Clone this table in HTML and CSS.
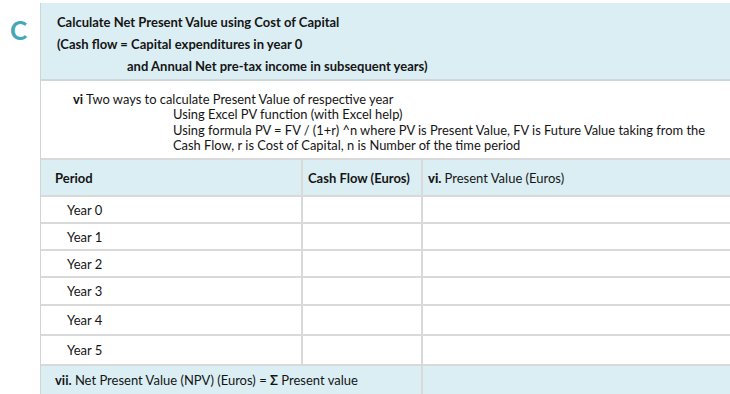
FILE: index.html
```html
<!DOCTYPE html>
<html>
<head>
<meta charset="utf-8">
<link rel="stylesheet" href="styles.css">
</head>
<body>
<div class="wrap">
  <div class="letter">C</div>
  <div class="panel">
    <div class="title">
      <div>Calculate Net Present Value using Cost of Capital</div>
      <div>(Cash flow = Capital expenditures in year 0</div>
      <div class="indent">and Annual Net pre-tax income in subsequent years)</div>
    </div>
    <div class="note">
      <div><b>vi</b> Two ways to calculate Present Value of respective year</div>
      <div class="sub">
        <div>Using Excel PV function (with Excel help)</div>
        <div>Using formula PV = FV / (1+r) ^n where PV is Present Value, FV is Future Value taking from the</div>
        <div>Cash Flow, r is Cost of Capital, n is Number of the time period</div>
      </div>
    </div>
    <table class="grid">
      <colgroup>
        <col class="c1"><col class="c2"><col class="c3">
      </colgroup>
      <tr class="head">
        <th class="period">Period</th>
        <th>Cash Flow (Euros)</th>
        <th><b>vi.</b> <span class="reg">Present Value (Euros)</span></th>
      </tr>
      <tr class="r27"><td class="yr">Year 0</td><td></td><td></td></tr>
      <tr class="r27"><td class="yr">Year 1</td><td></td><td></td></tr>
      <tr class="r27"><td class="yr">Year 2</td><td></td><td></td></tr>
      <tr class="r28"><td class="yr">Year 3</td><td></td><td></td></tr>
      <tr class="r30"><td class="yr">Year 4</td><td></td><td></td></tr>
      <tr class="r30"><td class="yr">Year 5</td><td></td><td></td></tr>
      <tr class="total">
        <td colspan="2" class="npv"><b>vii.</b> Net Present Value (NPV) (Euros) = <b>Σ</b> Present value</td>
        <td></td>
      </tr>
    </table>
  </div>
</div>
</body>
</html>
```
FILE: styles.css
```css
html, body {
  margin: 0;
  padding: 0;
  background: #ffffff;
}
body {
  width: 730px;
  height: 394px;
  overflow: hidden;
  font-family: Lato, "Open Sans", sans-serif;
  color: #151515;
}
.wrap {
  display: flex;
  padding-top: 3px;
}
.letter {
  width: 40px;
  flex: none;
  box-sizing: border-box;
  padding: 14px 0 0 10px;
  font-size: 26px;
  font-weight: 700;
  line-height: 26px;
  color: #45a8b6;
}
.panel {
  flex: 1;
  border-left: 1px solid #cfd4d6;
}
.title {
  background: #dbeef3;
  height: 78px;
  box-sizing: border-box;
  padding: 8px 0 0 16px;
  font-size: 13px;
  font-weight: 700;
  line-height: 22px;
  border-bottom: 2px solid #cdd6d9;
}
.title .indent {
  padding-left: 70px;
}
.note {
  height: 77px;
  box-sizing: border-box;
  padding: 11px 0 0 32px;
  font-size: 12.9px;
  line-height: 15.33px;
}
.note .sub {
  padding-left: 100px;
}
.grid {
  width: 100%;
  border-collapse: collapse;
  table-layout: fixed;
  font-size: 13px;
}
.c1 { width: 261px; }
.c2 { width: 120px; }
.grid th, .grid td {
  border-top: 2px solid #d9d9d9;
  border-left: 2px solid #d9d9d9;
  padding: 0 0 0 5px;
  text-align: left;
  vertical-align: middle;
  white-space: nowrap;
}
.grid th:first-child, .grid td:first-child {
  border-left: none;
}
.head th {
  height: 35px;
  background: #dbeef3;
  font-weight: 700;
}
.head th.period {
  padding-left: 14px;
}
.head .reg {
  font-weight: 400;
}
.r27 td { height: 25px; }
.r28 td { height: 26px; }
.r30 td { height: 28px; }
.grid td.yr {
  padding-left: 26px;
}
.total td {
  height: 28px;
  background: #dbeef3;
}
.grid td.npv {
  padding-left: 14px;
}
```
